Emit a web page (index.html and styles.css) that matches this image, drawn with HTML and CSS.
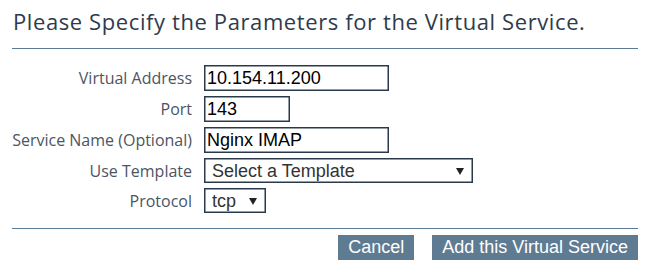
FILE: index.html
```html
<!DOCTYPE html>
<html>
<head>
<meta charset="utf-8">
<link rel="stylesheet" href="styles.css">
</head>
<body>
<div class="page">
  <div class="header">
    <h1 class="title">Please Specify the Parameters for the Virtual Service.</h1>
  </div>
  <form class="form">
    <label class="label" for="va">Virtual Address</label>
    <div class="field"><input id="va" class="input input-wide" type="text" value="10.154.11.200"></div>
    <label class="label" for="port">Port</label>
    <div class="field"><input id="port" class="input input-port" type="text" value="143"></div>
    <label class="label" for="sn">Service Name (Optional)</label>
    <div class="field"><input id="sn" class="input input-wide" type="text" value="Nginx IMAP"></div>
    <label class="label" for="tpl">Use Template</label>
    <div class="field"><span class="select-wrap select-template"><select id="tpl" class="select"><option>Select a Template</option></select></span></div>
    <label class="label" for="proto">Protocol</label>
    <div class="field"><span class="select-wrap select-proto"><select id="proto" class="select"><option>tcp</option><option>udp</option></select></span></div>
  </form>
  <div class="actions">
    <button class="btn" type="button">Cancel</button>
    <button class="btn" type="button">Add this Virtual Service</button>
  </div>
</div>
</body>
</html>
```
FILE: styles.css
```css
html, body {
  margin: 0;
  padding: 0;
  background: #ffffff;
}
.page {
  padding: 0 13px 0 12px;
  font-family: "Open Sans", "Noto Sans", sans-serif;
}
.header {
  padding: 6px 0 12px 1px;
  border-bottom: 1px solid #5b7a98;
}
.title {
  margin: 0;
  font-size: 22px;
  line-height: 30px;
  letter-spacing: 0.6px;
  font-weight: 400;
  color: #2e3b4c;
}
.form {
  display: grid;
  grid-template-columns: 180px 1fr;
  column-gap: 12px;
  row-gap: 5px;
  align-items: baseline;
  margin: 16px 0 0 0;
  padding-bottom: 15px;
  border-bottom: 1px solid #5b7a98;
}
.label {
  text-align: right;
  font-size: 16px;
  color: #4c5564;
}
.field {
  display: flex;
}
.input {
  box-sizing: border-box;
  height: 26px;
  margin: 0;
  padding: 0 2px;
  border: 1px solid #2b3a4a;
  box-shadow: inset 0 0 0 0.5px #2b3a4a;
  border-radius: 0;
  font-family: "Liberation Sans", Arial, sans-serif;
  font-size: 18px;
  color: #000;
  background: #fff;
  outline: none;
}
.input-wide { width: 185px; }
.input-port { width: 86px; }
.select-wrap {
  position: relative;
  display: inline-block;
}
.select-wrap::after {
  content: "";
  position: absolute;
  right: 9px;
  top: 50%;
  margin-top: -3px;
  border-left: 4px solid transparent;
  border-right: 4px solid transparent;
  border-top: 7px solid #222;
  pointer-events: none;
}
.select {
  appearance: none;
  -webkit-appearance: none;
  box-sizing: border-box;
  height: 25px;
  margin: 0;
  padding: 0 20px 0 7px;
  border: 1px solid #2b3a4a;
  box-shadow: inset 0 0 0 0.5px #2b3a4a;
  border-radius: 0;
  font-family: "Liberation Sans", Arial, sans-serif;
  font-size: 18px;
  color: #333;
  background: #fff;
}
.select-template .select { width: 269px; }
.select-proto .select { width: 62px; }
.actions {
  display: flex;
  justify-content: flex-end;
  gap: 18px;
  padding-top: 6px;
}
.btn {
  height: 25px;
  margin: 0;
  padding: 0 10px;
  border: none;
  border-radius: 0;
  background: #5e7b92;
  color: #fff;
  font-family: "Liberation Sans", Arial, sans-serif;
  font-size: 18px;
  line-height: 25px;
}
```
